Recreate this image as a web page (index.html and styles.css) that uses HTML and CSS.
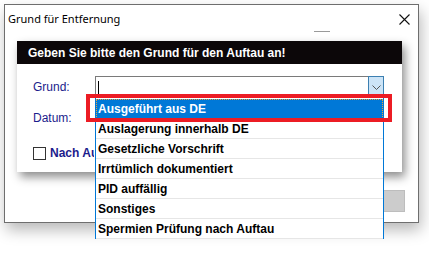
FILE: index.html
```html
<!DOCTYPE html>
<html lang="de">
<head>
  <meta charset="UTF-8">
  <title>Grund für Entfernung</title>
  <link rel="stylesheet" href="styles.css">
</head>
<body>

  <div class="window">
    <div class="titlebar">
      <span class="title">Grund für Entfernung</span>
      <span class="close">
        <svg width="11" height="11" viewBox="0 0 11 11">
          <path d="M0.5 0.5 L10.5 10.5 M10.5 0.5 L0.5 10.5" stroke="#111" stroke-width="1.1" fill="none"/>
        </svg>
      </span>
    </div>
    <div class="min-dash"></div>

    <div class="dialog">
      <div class="dialog-header">Geben Sie bitte den Grund für den Auftau an!</div>
      <div class="dialog-body">
        <div class="form-row">
          <span class="field-label">Grund:</span>
          <div class="combo">
            <span class="caret"></span>
            <span class="combo-btn">
              <svg width="9" height="5" viewBox="0 0 9 5">
                <path d="M0.5 0.5 L4.5 4.5 L8.5 0.5" stroke="#555" stroke-width="1" fill="none"/>
              </svg>
            </span>

            <ul class="combo-list">
              <li class="combo-item selected">Ausgeführt aus DE</li>
              <li class="combo-item">Auslagerung innerhalb DE</li>
              <li class="combo-item">Gesetzliche Vorschrift</li>
              <li class="combo-item">Irrtümlich dokumentiert</li>
              <li class="combo-item">PID auffällig</li>
              <li class="combo-item">Sonstiges</li>
              <li class="combo-item">Spermien Prüfung nach Auftau</li>
            </ul>
            <div class="mark"></div>
          </div>
        </div>

        <div class="form-row">
          <span class="field-label">Datum:</span>
        </div>

        <div class="check-row">
          <span class="checkbox"></span>
          <span class="check-label">Nach Auftau</span>
        </div>
      </div>
    </div>

    <div class="actions">
      <span class="btn"></span>
    </div>
  </div>

</body>
</html>
```

FILE: styles.css
```css
:root {
  --navy: #1c1c8c;
  --win-blue: #0078d7;
  --mark-red: #ec1c24;
  --border-gray: #6e6e6e;
}

body {
  margin: 0;
  padding: 0;
  width: 429px;
  height: 260px;
  overflow: hidden;
  background: #ffffff;
  font-family: "Liberation Sans", Arial, sans-serif;
  color: #000000;
}

/* Fenster */
.window {
  margin: 4px 0 0 4px;
  width: 415px;
  height: 219px;
  box-sizing: border-box;
  border: 1px solid var(--border-gray);
  background: #ffffff;
  box-shadow: 2px 7px 14px rgba(0, 0, 0, 0.28);
  position: relative;
}

.titlebar {
  display: flex;
  justify-content: space-between;
  align-items: center;
  height: 26px;
  padding: 0 8px 0 3px;
}

.title {
  font-family: "Noto Sans", sans-serif;
  font-size: 11px;
  color: #000000;
}

.close {
  display: flex;
  padding-top: 2px;
}

.min-dash {
  margin-left: 309px;
  width: 16px;
  height: 1px;
  background: #9a9a9a;
}

/* Dialog */
.dialog {
  margin: 9px 0 0 12px;
  width: 385px;
  box-shadow: 3px 5px 9px rgba(0, 0, 0, 0.45);
  position: relative;
  z-index: 2;
}

.dialog-header {
  height: 23px;
  line-height: 24px;
  padding-left: 11px;
  background: #0c0709;
  color: #ffffff;
  font-size: 12px;
  font-weight: 700;
}

.dialog-body {
  background: #ffffff;
  padding: 12px 0 12px 16px;
}

.form-row {
  display: flex;
  align-items: center;
  height: 22px;
}

.form-row + .form-row {
  margin-top: 9px;
}

.field-label {
  width: 62px;
  font-size: 12px;
  color: var(--navy);
}

.combo {
  position: relative;
  width: 289px;
  height: 22px;
  box-sizing: border-box;
  border: 1px solid #7a7a7a;
  display: flex;
  justify-content: space-between;
  align-items: center;
  background: #ffffff;
}

.caret {
  margin-left: 2px;
  width: 1px;
  height: 13px;
  background: #000000;
}

.combo-btn {
  width: 16px;
  height: 22px;
  margin: -1px -1px -1px 0;
  box-sizing: border-box;
  border: 1px solid #3c7fb1;
  background: #cce4f7;
  display: flex;
  justify-content: center;
  align-items: center;
}

.combo-list {
  list-style: none;
  margin: 0;
  padding: 1px 0 0 0;
  position: absolute;
  top: 21px;
  left: -1px;
  width: 289px;
  box-sizing: border-box;
  border-left: 1px solid var(--win-blue);
  border-right: 1px solid var(--win-blue);
  background: #ffffff;
  z-index: 5;
}

.combo-item {
  height: 20px;
  box-sizing: border-box;
  line-height: 20px;
  padding-left: 2px;
  font-size: 12px;
  font-weight: 700;
  border-bottom: 1px solid #e6e6e6;
  white-space: nowrap;
}

.combo-item.selected {
  background: var(--win-blue);
  color: #ffffff;
  outline: 1px dotted #e9a33c;
  outline-offset: -1px;
  border-bottom-color: var(--win-blue);
}

.mark {
  position: absolute;
  left: -10px;
  top: 17px;
  width: 306px;
  height: 28px;
  box-sizing: border-box;
  border: 4px solid var(--mark-red);
  z-index: 6;
}

.check-row {
  display: flex;
  align-items: center;
  gap: 4px;
  margin-top: 17px;
}

.checkbox {
  width: 13px;
  height: 13px;
  box-sizing: border-box;
  border: 1px solid #333333;
  background: #ffffff;
}

/* wird von der Liste verdeckt */
.check-label {
  width: 44px;
  overflow: hidden;
  white-space: nowrap;
  font-size: 12px;
  font-weight: 700;
  color: var(--navy);
}

/* Schaltfläche */
.actions {
  display: flex;
  justify-content: flex-end;
  margin-top: 18px;
  padding-right: 13px;
}

.btn {
  width: 75px;
  height: 22px;
  box-sizing: border-box;
  border: 1px solid #bdbdbd;
  background: #cccccc;
}
```
